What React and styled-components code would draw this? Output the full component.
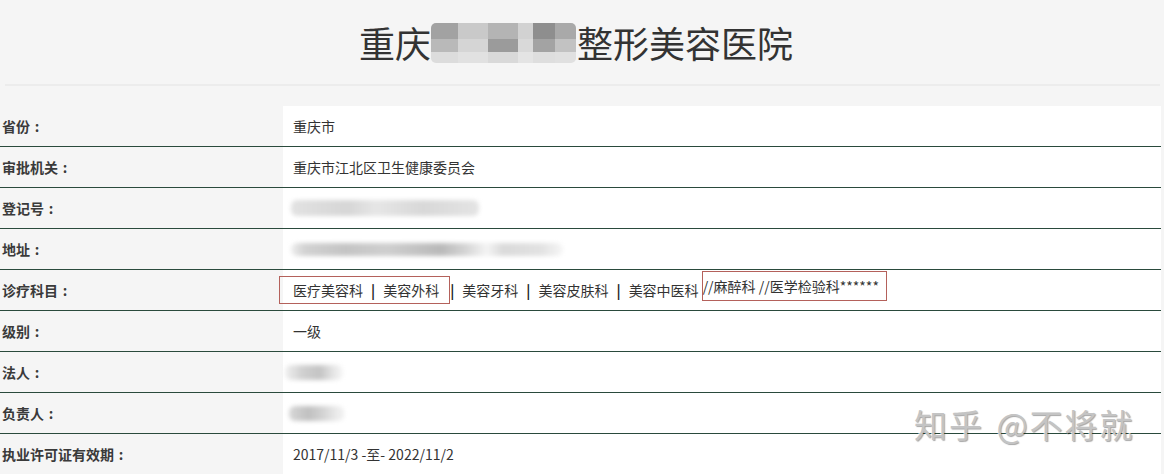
import React from 'react';
import styled, { createGlobalStyle } from 'styled-components';

const GlobalStyle = createGlobalStyle`
  html, body {
    margin: 0;
    padding: 0;
    background: #f5f5f5;
  }
  body {
    font-family: "Noto Sans CJK SC", "Noto Sans", sans-serif;
    color: #333;
  }
`;

const Page = styled.div`
  position: relative;
  width: 1164px;
  height: 474px;
  overflow: hidden;
  background: #f5f5f5;
`;

const Header = styled.div`
  height: 84px;
  display: flex;
  align-items: center;
  justify-content: center;
  padding-right: 12px;
  box-sizing: border-box;
`;

const Title = styled.h1`
  margin: 0;
  display: flex;
  align-items: center;
  font-size: 36px;
  font-weight: 400;
  color: #333;
  line-height: 40px;
`;

const Mosaic = styled.div`
  display: grid;
  grid-template-columns: 27px 30px 30px 15px 22px 21px;
  grid-template-rows: 16px 13px 11px;
  width: 145px;
  height: 40px;
  border-radius: 5px;
  overflow: hidden;
  filter: blur(0.6px);
  margin: 2px 1px 0 0;
`;

const Tile = styled.div`
  background: ${p => p.c};
`;

const Divider = styled.div`
  height: 2px;
  margin: 0 4px 0 5px;
  background: #ececec;
`;

const Table = styled.div`
  margin-top: 20px;
  width: 1161px;
`;

const Row = styled.div`
  display: grid;
  grid-template-columns: 283px 1fr;
  height: 40px;
  border-bottom: 1px solid #2a4a3c;
`;

const Label = styled.div`
  display: flex;
  align-items: center;
  padding-left: 2px;
  font-size: 14px;
  font-weight: 700;
  color: #3a3a3a;
  background: #f5f5f5;
`;

const Colon = styled.span`
  display: inline-block;
  width: 14px;
  text-align: center;
`;

const Value = styled.div`
  display: flex;
  align-items: center;
  padding-left: 10px;
  font-size: 14px;
  color: #333;
  background: #fff;
  white-space: nowrap;
`;

const Sep = styled.span`
  font-weight: 700;
  color: #222;
  margin: 0 8px 0 ${p => (p.tight ? '0' : '8px')};
`;

const Mark = styled.span`
  display: inline-flex;
  align-items: center;
  box-sizing: border-box;
  height: ${p => p.h}px;
  margin-left: ${p => p.ml}px;
  padding: 0 ${p => p.pr}px 0 ${p => p.pl}px;
  border: 1px solid #b4615b;
  transform: translateY(${p => p.dy}px);
`;

const Redact = styled.div`
  width: ${p => p.w}px;
  height: ${p => p.h}px;
  margin-left: ${p => p.ml || 0}px;
  border-radius: 6px;
  background: ${p => p.bg};
  filter: blur(2px);
`;

const Watermark = styled.div`
  position: absolute;
  left: 914px;
  top: 400px;
  font-size: 33px;
  letter-spacing: 2px;
  word-spacing: 3px;
  color: #c4c4c4;
  text-shadow: 1px 1px 1px rgba(0, 0, 0, 0.35), -1px -1px 0 rgba(255, 255, 255, 0.7);
`;

const mosaic = [
  '#a2a2a2', '#c9c9c9', '#b4b4b4', '#d2d2d2', '#8e8e8e', '#a9a9a9',
  '#b9b9b9', '#d5d5d5', '#9b9b9b', '#d9d9d9', '#a3a3a3', '#c2c2c2',
  '#dcdcdc', '#e1e1e1', '#d9d9d9', '#e4e4e4', '#dedede', '#e0e0e0',
];

const Field = ({ label, children }) => (
  <Row>
    <Label>{label}<Colon>:</Colon></Label>
    {children}
  </Row>
);

function Departments() {
  return (
    <Value>
      <Mark h={28} ml={-14} pl={13} pr={10} dy={0}>
        医疗美容科<Sep>|</Sep>美容外科
      </Mark>
      <Sep tight>|</Sep>
      美容牙科<Sep>|</Sep>美容皮肤科<Sep>|</Sep>美容中医科
      <Mark h={30} ml={3} pl={0} pr={7} dy={-4}>
        //麻醉科 //医学检验科******
      </Mark>
    </Value>
  );
}

export default function App() {
  return (
    <Page>
      <GlobalStyle />
      <Header>
        <Title>
          重庆
          <Mosaic>
            {mosaic.map((c, i) => <Tile key={i} c={c} />)}
          </Mosaic>
          整形美容医院
        </Title>
      </Header>
      <Divider />
      <Table>
        <Field label="省份">
          <Value>重庆市</Value>
        </Field>
        <Field label="审批机关">
          <Value>重庆市江北区卫生健康委员会</Value>
        </Field>
        <Field label="登记号">
          <Value>
            <Redact w={188} h={16} ml={-2} bg="linear-gradient(90deg, #e2e2e2, #d6d6d6 30%, #e6e6e6 45%, #d8d8d8 70%, #e4e4e4)" />
          </Value>
        </Field>
        <Field label="地址">
          <Value>
            <Redact w={272} h={13} ml={-2} bg="linear-gradient(90deg, #eee 0, #d2d2d2 5%, #c4c4c4 20%, #cfcfcf 35%, #b9b9b9 55%, #d4d4d4 64%, #f4f4f4 72%, #dadada 78%, #e2e2e2 92%, #f6f6f6)" />
          </Value>
        </Field>
        <Field label="诊疗科目">
          <Departments />
        </Field>
        <Field label="级别">
          <Value>一级</Value>
        </Field>
        <Field label="法人">
          <Value>
            <Redact w={58} h={15} ml={-8} bg="linear-gradient(90deg, #f0f0f0, #d0d0d0 30%, #c4c4c4 60%, #e8e8e8 85%, #f6f6f6)" />
          </Value>
        </Field>
        <Field label="负责人">
          <Value>
            <Redact w={55} h={15} ml={-4} bg="linear-gradient(90deg, #d8d8d8, #c0c0c0 35%, #d2d2d2 60%, #eeeeee 90%)" />
          </Value>
        </Field>
        <Field label="执业许可证有效期">
          <Value>2017/11/3 -至- 2022/11/2</Value>
        </Field>
      </Table>
      <Watermark>知乎 @不将就</Watermark>
    </Page>
  );
}
